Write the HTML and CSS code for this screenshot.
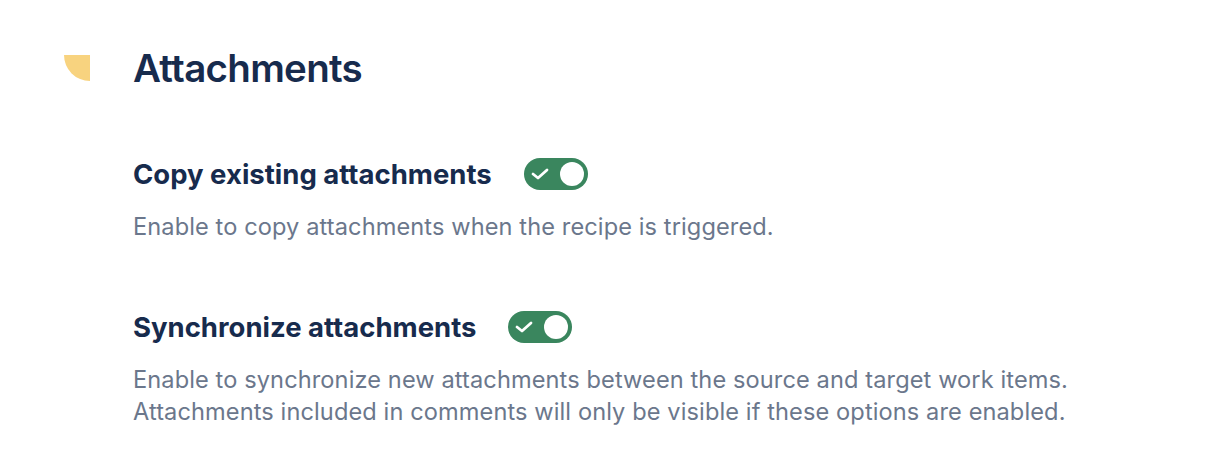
FILE: index.html
```html
<!DOCTYPE html>
<html lang="en">
<head>
<meta charset="utf-8">
<title>Attachments</title>
<link rel="stylesheet" href="styles.css">
</head>
<body>
  <main class="settings">
    <header class="section-head">
      <span class="section-mark" aria-hidden="true"></span>
      <h1 class="section-title">Attachments</h1>
    </header>

    <div class="option">
      <div class="option-row">
        <h2 class="option-label">Copy existing attachments</h2>
        <button class="toggle is-on" type="button" role="switch" aria-checked="true" aria-label="Copy existing attachments">
          <svg class="toggle-check" viewBox="0 0 20 16" width="20" height="16" aria-hidden="true">
            <path d="M3 8 L8 12 L17 4" fill="none" stroke="#fff" stroke-width="2.8" stroke-linecap="round" stroke-linejoin="round"/>
          </svg>
          <span class="toggle-knob"></span>
        </button>
      </div>
      <p class="option-desc">Enable to copy attachments when the recipe is triggered.</p>
    </div>

    <div class="option">
      <div class="option-row">
        <h2 class="option-label">Synchronize attachments</h2>
        <button class="toggle is-on" type="button" role="switch" aria-checked="true" aria-label="Synchronize attachments">
          <svg class="toggle-check" viewBox="0 0 20 16" width="20" height="16" aria-hidden="true">
            <path d="M3 8 L8 12 L17 4" fill="none" stroke="#fff" stroke-width="2.8" stroke-linecap="round" stroke-linejoin="round"/>
          </svg>
          <span class="toggle-knob"></span>
        </button>
      </div>
      <p class="option-desc">Enable to synchronize new attachments between the source and target work items.<br>Attachments included in comments will only be visible if these options are enabled.</p>
    </div>
  </main>
</body>
</html>
```

FILE: styles.css
```css
* {
  box-sizing: border-box;
}

html,
body {
  margin: 0;
  background: #ffffff;
}

body {
  font-family: Inter, "Noto Sans", "Liberation Sans", sans-serif;
  color: #172b4d;
}

.settings {
  padding: 42px 0 0 64px;
}

.section-head {
  display: flex;
  align-items: center;
  gap: 43px;
}

.section-mark {
  width: 26px;
  height: 26px;
  background: #f8d37f;
  border-bottom-left-radius: 100%;
  flex: none;
}

.section-title {
  margin: 0;
  font-size: 38.5px;
  line-height: 52px;
  font-weight: 600;
  letter-spacing: -0.7px;
}

.option {
  padding-left: 69px;
  margin-top: 62px;
}

.option + .option {
  margin-top: 66px;
}

.option-row {
  display: flex;
  align-items: center;
  gap: 32px;
}

.option-label {
  margin: 0;
  font-size: 27.5px;
  line-height: 36px;
  font-weight: 700;
}

.option-desc {
  margin: 19px 0 0;
  font-size: 23.6px;
  line-height: 32px;
  letter-spacing: 0.1px;
  color: #6b778c;
}

.toggle {
  position: relative;
  width: 64px;
  height: 32px;
  padding: 0;
  border: none;
  border-radius: 16px;
  background: #3a865e;
  display: flex;
  align-items: center;
  cursor: pointer;
  flex: none;
}

.toggle-check {
  margin-left: 6px;
}

.toggle-knob {
  position: absolute;
  top: 4px;
  right: 4px;
  width: 24px;
  height: 24px;
  border-radius: 50%;
  background: #ffffff;
}
```
